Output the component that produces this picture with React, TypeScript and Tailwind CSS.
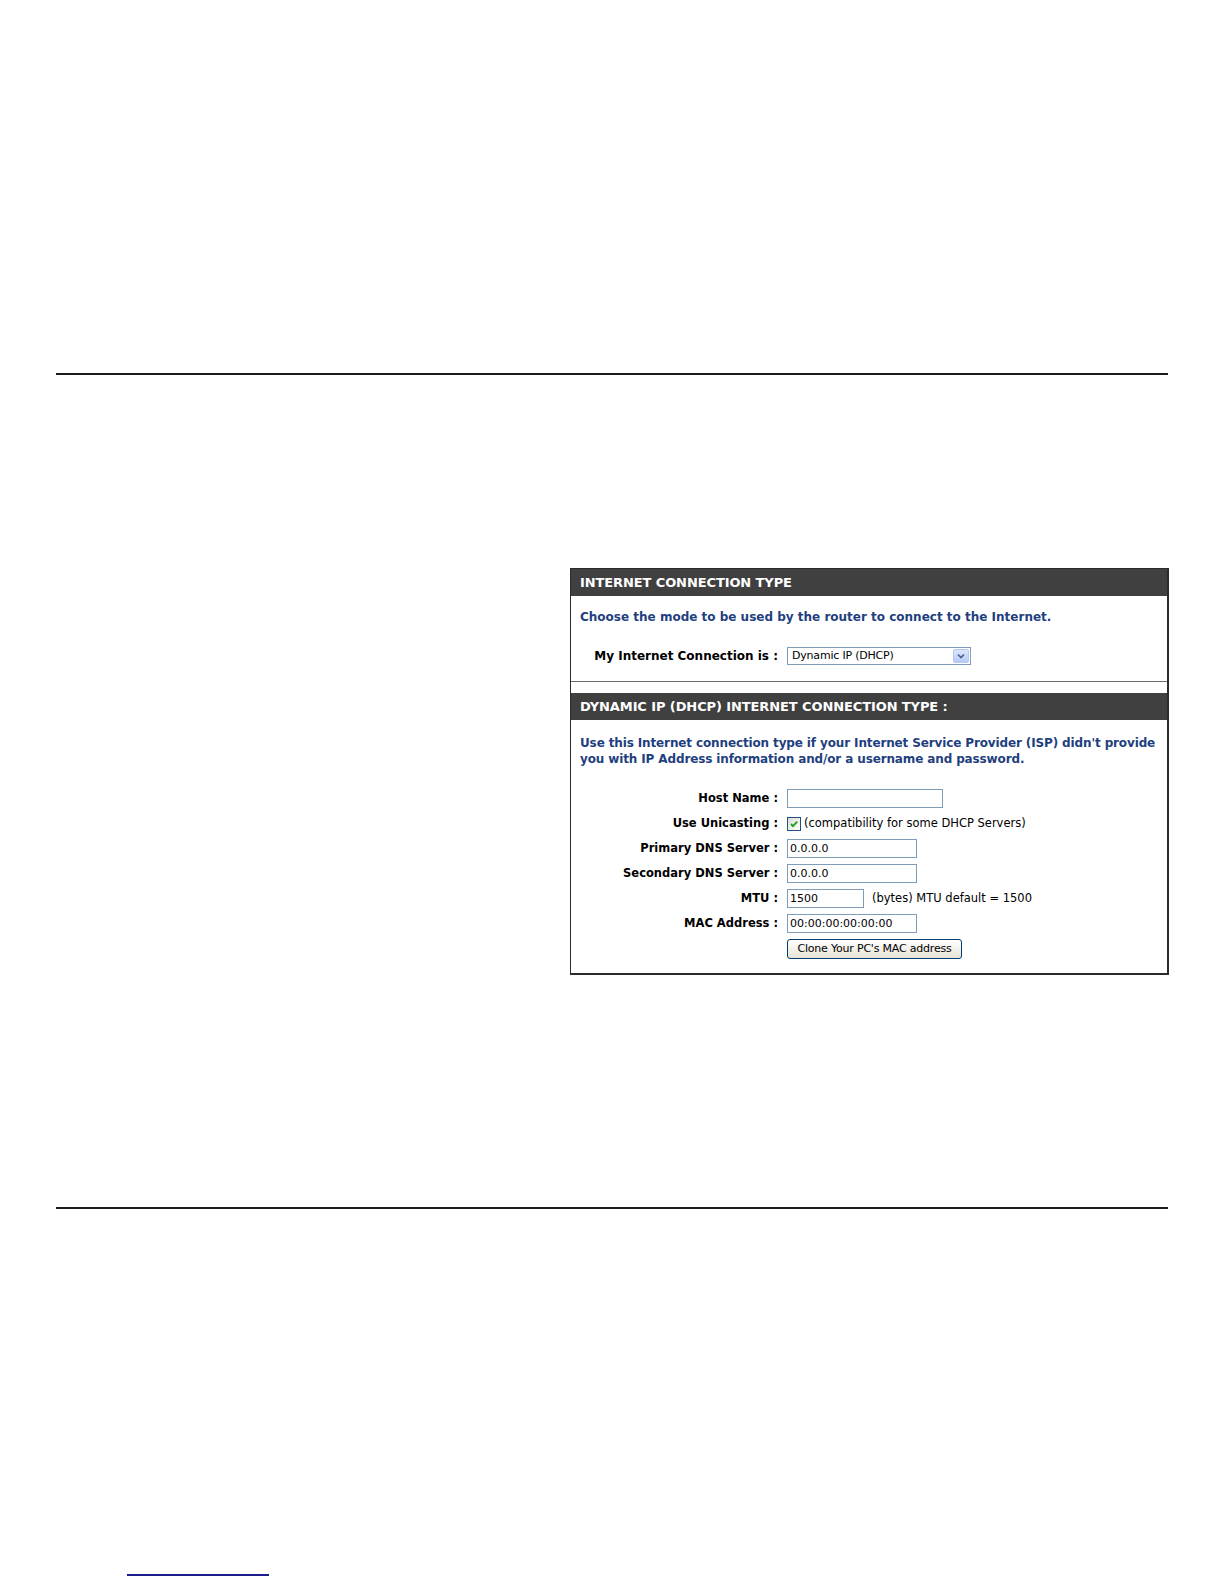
import React from 'react'

const font = "font-['DejaVu_Sans',sans-serif]"

function Field({ width, value }: { width: string; value: string }) {
    return (
        <input
            readOnly
            defaultValue={value}
            className={`${width} h-[19px] border border-[#7f9db9] bg-white px-[2px] text-[11px] text-black outline-none ${font}`}
        />
    )
}

function Row({ label, children }: { label: string; children: React.ReactNode }) {
    return (
        <div className="grid grid-cols-[207px_1fr] gap-x-[9px] h-[25px] items-center">
            <span className="text-right text-[11.5px] font-bold text-black whitespace-nowrap">{label}</span>
            <div className="flex items-center">{children}</div>
        </div>
    )
}

export default function App() {
    return (
        <div className={`w-[1224px] h-[1584px] bg-white ${font}`}>
            <div className="pt-[373px] px-[56px]">
                <div className="h-[2px] bg-[#1c1c1c]" />

                {/* router settings panel */}
                <div className="mt-[193px] flex justify-end -mr-px">
                    <div className="w-[599px] border border-r-2 border-b-2 border-[#2b2b2b]">
                        <div className="h-[27px] bg-[#404040] text-white text-[13px] font-bold tracking-[-0.1px] flex items-center pl-[9px] whitespace-nowrap">
                            INTERNET CONNECTION TYPE
                        </div>
                        <div className="h-[86px] border-b border-[#6b6b6b] pt-[13px]">
                            <p className="pl-[9px] text-[12px] leading-[16px] font-bold text-[#1f3f80] whitespace-nowrap">
                                Choose the mode to be used by the router to connect to the Internet.
                            </p>
                            <div className="grid grid-cols-[207px_1fr] gap-x-[9px] mt-[22px] items-center">
                                <span className="text-right text-[12px] font-bold text-black whitespace-nowrap">My Internet Connection is :</span>
                                <div className="w-[184px] h-[18px] border border-[#7f9db9] bg-white flex items-center justify-between pl-[4px] pr-px">
                                    <span className="text-[11px] text-black tracking-[-0.2px]">Dynamic IP (DHCP)</span>
                                    <span className="w-[16px] h-[14px] rounded-[2px] border border-[#b4c8f4] bg-gradient-to-b from-[#dbe6fd] to-[#b7cbf6] flex items-center justify-center">
                                        <svg width="8" height="6" viewBox="0 0 8 6">
                                            <path d="M1 1.5 L4 4.5 L7 1.5" fill="none" stroke="#4d6185" strokeWidth="1.6" />
                                        </svg>
                                    </span>
                                </div>
                            </div>
                        </div>

                        <div className="mt-[11px] h-[27px] bg-[#404040] text-white text-[13px] font-bold tracking-[-0.1px] flex items-center pl-[9px] whitespace-nowrap">
                            DYNAMIC IP (DHCP) INTERNET CONNECTION TYPE :
                        </div>
                        <div className="pt-[16px] pb-[12px]">
                            <p className="pl-[9px] text-[12px] leading-[15.5px] font-bold tracking-[-0.13px] text-[#1f3f80] whitespace-nowrap">
                                Use this Internet connection type if your Internet Service Provider (ISP) didn't provide
                                <br />
                                you with IP Address information and/or a username and password.
                            </p>
                            <div className="mt-[19px]">
                                <Row label="Host Name :">
                                    <Field width="w-[156px]" value="" />
                                </Row>
                                <Row label="Use Unicasting :">
                                    <span className="w-[14px] h-[14px] border border-[#1c5180] bg-gradient-to-br from-[#dcdcd6] to-white flex items-center justify-center">
                                        <svg width="10" height="10" viewBox="0 0 10 10">
                                            <path d="M2 5 L4 7.2 L8.2 2.6" fill="none" stroke="#21a121" strokeWidth="1.9" />
                                        </svg>
                                    </span>
                                    <span className="ml-[3px] text-[11.5px] text-black whitespace-nowrap">(compatibility for some DHCP Servers)</span>
                                </Row>
                                <Row label="Primary DNS Server :">
                                    <Field width="w-[130px]" value="0.0.0.0" />
                                </Row>
                                <Row label="Secondary DNS Server :">
                                    <Field width="w-[130px]" value="0.0.0.0" />
                                </Row>
                                <Row label="MTU :">
                                    <Field width="w-[77px]" value="1500" />
                                    <span className="ml-[8px] text-[11.5px] text-black whitespace-nowrap">(bytes) MTU default = 1500</span>
                                </Row>
                                <Row label="MAC Address :">
                                    <Field width="w-[130px]" value="00:00:00:00:00:00" />
                                </Row>
                                <Row label="">
                                    <button className="w-[175px] h-[20px] rounded-[3px] border border-[#003c74] bg-gradient-to-b from-white to-[#e6e3d6] text-[11px] tracking-[-0.2px] text-black leading-none">
                                        Clone Your PC's MAC address
                                    </button>
                                </Row>
                            </div>
                        </div>
                    </div>
                </div>

                <div className="mt-[232px] h-[2px] bg-[#1c1c1c]" />
                <div className="mt-[365px] ml-[71px] w-[142px] h-[2px] bg-[#1c1c8c]" />
            </div>
        </div>
    )
}
